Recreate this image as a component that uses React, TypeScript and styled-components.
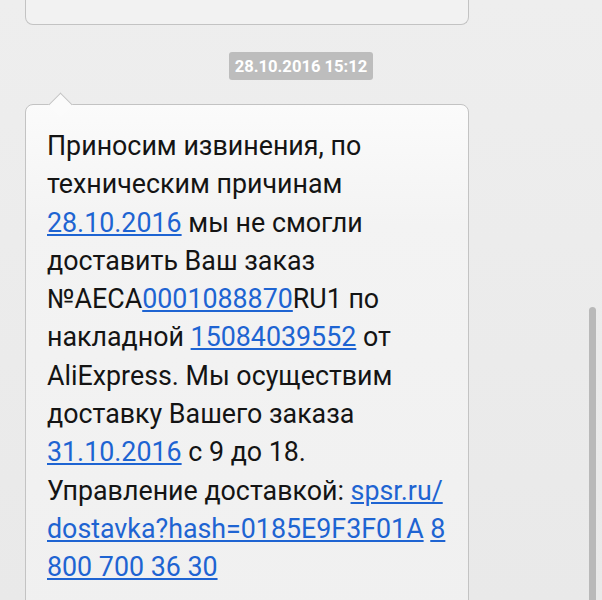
import React from "react";
import styled, { createGlobalStyle } from "styled-components";

const Global = createGlobalStyle`
  html, body { margin: 0; padding: 0; }
  body {
    background: #ededed;
    overflow: hidden;
    font-family: Roboto, "Noto Sans", "Liberation Sans", sans-serif;
  }
`;

const Screen = styled.div`
  position: relative;
  height: 600px;
  overflow: hidden;
  background: linear-gradient(#eeeeee, #e9e9e9);
`;

const Thread = styled.div`
  display: flex;
  flex-direction: column;
  padding-left: 25px;
`;

const PrevBubble = styled.div`
  width: 444px;
  height: 25px;
  box-sizing: border-box;
  border: 1px solid #c3c3c3;
  border-top: none;
  border-radius: 0 0 8px 8px;
  background: #f2f2f2;
`;

const DateRow = styled.div`
  display: flex;
  justify-content: center;
  margin: 27px 0 0 -25px;
`;

const DatePill = styled.div`
  height: 28px;
  box-sizing: border-box;
  padding: 0 6px;
  display: flex;
  align-items: center;
  border-radius: 3px;
  background: #bdbdbd;
  color: #ffffff;
  font-size: 16.6px;
  font-weight: 700;
`;

const Bubble = styled.div`
  position: relative;
  width: 444px;
  box-sizing: border-box;
  margin-top: 24px;
  padding: 22px 20px 30px 21px;
  border: 1px solid #c3c3c3;
  border-radius: 8px;
  background: linear-gradient(#fbfbfb 0px, #f3f3f3 120px, #f0f0f0 100%);
  color: #141414;
  font-size: 26.8px;
  line-height: 38.3px;
  white-space: nowrap;
`;

const Tail = styled.span`
  position: absolute;
  top: -9px;
  left: 26px;
  width: 16px;
  height: 16px;
  background: #fbfbfb;
  border-top: 1px solid #c3c3c3;
  border-left: 1px solid #c3c3c3;
  transform: rotate(45deg);
`;

const Link = styled.a`
  color: #1e64d2;
  text-decoration: underline;
  text-decoration-thickness: 1.5px;
  text-underline-offset: 2px;
`;

const Scrollbar = styled.div`
  position: absolute;
  right: 6px;
  top: 307px;
  bottom: 0;
  width: 7px;
  border-radius: 4px 4px 0 0;
  background: #b9b9b9;
`;

const App: React.FC = () => (
  <>
    <Global />
    <Screen>
      <Thread>
        <PrevBubble />
        <DateRow>
          <DatePill>28.10.2016 15:12</DatePill>
        </DateRow>
        <Bubble>
          <Tail />
          Приносим извинения, по
          <br />
          техническим причинам
          <br />
          <Link>28.10.2016</Link> мы не смогли
          <br />
          доставить Ваш заказ
          <br />
          №AECA<Link>0001088870</Link>RU1 по
          <br />
          накладной <Link>15084039552</Link> от
          <br />
          AliExpress. Мы осуществим
          <br />
          доставку Вашего заказа
          <br />
          <Link>31.10.2016</Link> с 9 до 18.
          <br />
          Управление доставкой: <Link>spsr.ru/</Link>
          <br />
          <Link>dostavka?hash=0185E9F3F01A</Link> <Link>8</Link>
          <br />
          <Link>800 700 36 30</Link>
        </Bubble>
      </Thread>
      <Scrollbar />
    </Screen>
  </>
);

export default App;
